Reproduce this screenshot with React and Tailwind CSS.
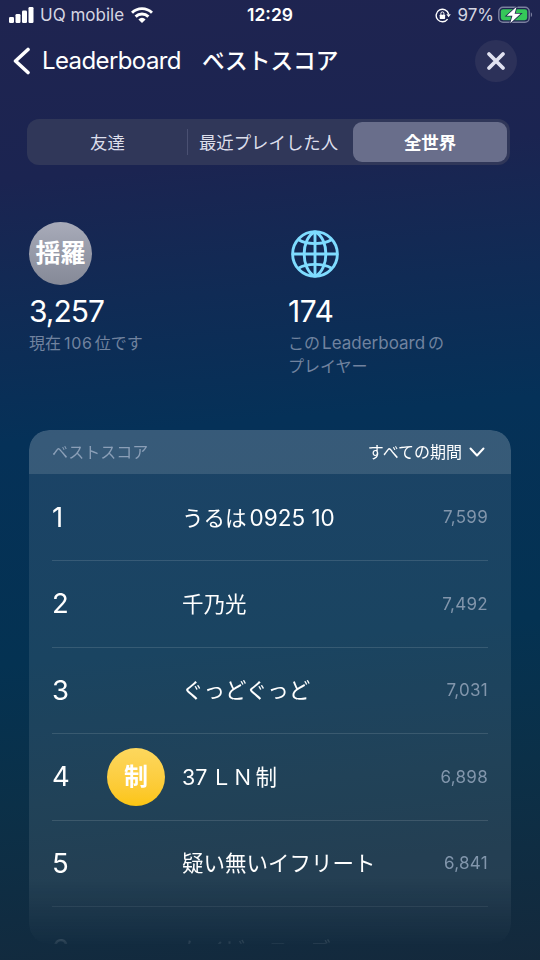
import React from 'react';

const fontStack = "font-['Inter','Noto_Sans_CJK_JP',sans-serif]";

const tabs = [
    { id: 'friends', label: '友達' },
    { id: 'recent', label: '最近プレイした人' },
    { id: 'global', label: '全世界' },
];

const scores = [
    { rank: 1, name: <>うるは<span className="ml-[3px] text-[22.5px]">0925 10</span></>, score: '7,599' },
    { rank: 2, name: '千乃光', score: '7,492' },
    { rank: 3, name: 'ぐっどぐっど', score: '7,031' },
    { rank: 4, name: <>37<span className="ml-[3px]">ＬＮ</span><span className="ml-[2px]">制</span></>, score: '6,898', avatar: '制' },
    { rank: 5, name: '疑い無いイフリート', score: '6,841' },
    { rank: 6, name: 'ケイビ・ユーズ', score: '' },
];

const SignalIcon = () => (
    <svg width="25" height="16" viewBox="0 0 25 16" fill="currentColor">
        <rect x="0" y="10" width="5" height="6" rx="1.2" />
        <rect x="6.5" y="7" width="5" height="9" rx="1.2" />
        <rect x="13" y="3.5" width="5" height="12.5" rx="1.2" />
        <rect x="19.5" y="0" width="5" height="16" rx="1.2" />
    </svg>
);

const WifiIcon = () => (
    <svg width="22" height="16" viewBox="0 0 22 16" fill="none" stroke="currentColor" strokeWidth="2.9">
        <path d="M1 5.7C6.5 .2 15.5 .2 21 5.7" />
        <path d="M4.6 9.6C8.2 6.1 13.8 6.1 17.4 9.6" />
        <path d="M7.4 12.4a5 5 0 0 1 7.2 0L11 16z" fill="currentColor" stroke="none" />
    </svg>
);

const LockIcon = () => (
    <svg width="16" height="15" viewBox="0 0 16 15" fill="none" stroke="currentColor" strokeWidth="1.4">
        <path d="M12.6 11.2A6.3 6.3 0 1 1 13.6 6" />
        <path d="M11.4 6.2h4.4l-2.2 3z" fill="currentColor" stroke="none" />
        <rect x="4.7" y="6.7" width="5.4" height="4.2" rx=".6" fill="currentColor" stroke="none" />
        <path d="M5.9 7V5.4a1.5 1.5 0 0 1 3 0V7" strokeWidth="1" />
    </svg>
);

const BatteryIcon = () => (
    <svg width="36" height="18" viewBox="0 0 36 18">
        <rect x=".8" y="1.2" width="30.4" height="15" rx="4.2" fill="none" stroke="#7b7f9e" strokeWidth="1.4" />
        <rect x="2.8" y="3.2" width="26.4" height="11" rx="2.4" fill="#35c759" />
        <path d="M32.8 6.3c1.7.7 1.7 4.1 0 4.8z" fill="#7b7f9e" />
        <path d="M18.6.8 8.7 9.8h5.7l-2.2 7.4 10.4-9.4h-6z" fill="#fff" stroke="#1f2450" strokeWidth="1.6" paintOrder="stroke" />
    </svg>
);

const GlobeIcon = () => (
    <svg width="48" height="48" viewBox="0 0 48 48" fill="none" stroke="#7fdcff" strokeWidth="2.9">
        <circle cx="24" cy="24" r="22.4" />
        <path d="M24 1.6C9.5 9 9.5 39 24 46.4M24 1.6C38.5 9 38.5 39 24 46.4" />
        <path d="M24 1.4v45.2M1.4 24h45.2" />
        <path d="M7.5 9.8C15.5 14.9 32.5 14.9 40.5 9.8" />
        <path d="M7.5 38.2C15.5 33.1 32.5 33.1 40.5 38.2" />
    </svg>
);

const StatusBar = () => (
    <div className="grid h-[30px] shrink-0 grid-cols-[1fr_auto_1fr] items-center pl-[9px] pr-[6px] text-[17px]">
        <div className="flex items-center">
            <SignalIcon />
            <span className="ml-[6px] mr-[7px] pt-px text-[#d5d6e2]">UQ mobile</span>
            <WifiIcon />
        </div>
        <span className="pr-[3px] pt-px text-[17.5px] font-semibold">12:29</span>
        <div className="flex items-center justify-end">
            <LockIcon />
            <span className="ml-[6px] mr-[4px] pt-px text-[#d5d6e2]">97%</span>
            <BatteryIcon />
        </div>
    </div>
);

const NavBar = () => (
    <div className="flex h-[61px] shrink-0 items-center pl-[13px] pr-[23px]">
        <svg width="18" height="28" viewBox="0 0 18 28" fill="none" stroke="currentColor" strokeWidth="3.6" strokeLinecap="round" strokeLinejoin="round">
            <path d="M15 2.5 2.5 14 15 25.5" />
        </svg>
        <span className="ml-[11px] text-[24px] tracking-[-0.6px]">Leaderboard</span>
        <h1 className="ml-[21px] pt-[2px] text-[22.7px] font-medium">ベストスコア</h1>
        <button className="ml-auto flex size-[42px] items-center justify-center rounded-full bg-[#2c3159]">
            <svg width="20" height="20" viewBox="0 0 20 20" stroke="#e0e1f0" strokeWidth="3.8" strokeLinecap="round">
                <path d="m3 3 14 14M17 3 3 17" />
            </svg>
        </button>
    </div>
);

const Tabs = ({ active }) => (
    <div className="mx-[27px] mt-[28px] flex h-[46px] w-[483px] shrink-0 items-center rounded-[12px] bg-[#303759] p-[3px] text-[17.4px] text-[#dcdeeb]">
        {tabs.map((tab, i) => (
            <button
                key={tab.id}
                className={
                    tab.id === active
                        ? 'ml-[2px] h-[40px] w-[154px] rounded-[9px] bg-[#696e8b] pt-[2px] font-bold text-white'
                        : i === 0
                            ? 'h-[26px] w-[158px] border-r border-[#4a5072] pr-[2px] pt-px'
                            : 'h-[26px] w-[163px] whitespace-nowrap pr-[2px] pt-px'
                }
            >
                {tab.label}
            </button>
        ))}
    </div>
);

const Stats = () => (
    <div className="flex h-[265px] shrink-0 pl-[29px] pt-[57px]">
        <div className="w-[259px]">
            <div className="flex size-[63px] items-center justify-center rounded-full bg-linear-to-b from-[#a8abb9] to-[#858997] pt-px text-[25px] font-bold">
                揺羅
            </div>
            <div className="mt-[7px] text-[30px] leading-[38px] tracking-[-1px]">3,257</div>
            <div className="mt-[2px] text-[16px] leading-[23px] text-[#71839f]">
                現在<span className="ml-[3px] mr-[2px] tracking-[0.7px]">106</span>位です
            </div>
        </div>
        <div>
            <div className="flex h-[63px] items-center pl-[3px]">
                <GlobeIcon />
            </div>
            <div className="mt-[7px] text-[30px] leading-[38px] tracking-[-0.5px]">174</div>
            <div className="mt-[2px] text-[16px] leading-[23px] text-[#71839f]">
                この<span className="ml-[2px] mr-[3px] text-[17px]">Leaderboard</span>の<br />プレイヤー
            </div>
        </div>
    </div>
);

const ScoreRow = ({ rank, name, score, avatar }) => (
    <div className="mx-[23px] flex h-[86.4px] items-center border-b border-white/12">
        <span className="w-[55px] text-[27.5px]">{rank}</span>
        <div className="w-[75px]">
            {avatar && (
                <div className="flex size-[58px] items-center justify-center rounded-full bg-linear-to-b from-[#fdd75d] to-[#fcc50f] pt-px text-[24px] font-bold">
                    {avatar}
                </div>
            )}
        </div>
        <span className="text-[21.5px]">{name}</span>
        <span className="ml-auto pt-px text-[17px] tracking-[0.3px] text-[#8296ac]">{score}</span>
    </div>
);

export default function App() {
    return (
        <div className={`flex h-[960px] w-[540px] flex-col overflow-hidden bg-linear-[175deg,#1f2450_0%,#1b2451_18%,#102b55_31%,#053158_44%,#043252_66%,#0b3048_80%,#14293c_100%] text-white ${fontStack}`}>
            <StatusBar />
            <NavBar />
            <Tabs active="global" />
            <Stats />
            <div className="mx-[29px] h-[514px] w-[482px] shrink-0 overflow-hidden rounded-[20px] bg-white/9 mask-[linear-gradient(to_bottom,black_87%,transparent_101%)]">
                <div className="mb-px flex h-[44px] items-center justify-between bg-white/12 pl-[23px] pr-[26px] text-[16px]">
                    <span className="text-[#8b9fb7]">ベストスコア</span>
                    <span className="flex items-center gap-[7px]">
                        すべての期間
                        <svg width="16" height="10" viewBox="0 0 16 10" fill="none" stroke="currentColor" strokeWidth="2" strokeLinecap="round" strokeLinejoin="round">
                            <path d="m1.5 1.5 6.5 7 6.5-7" />
                        </svg>
                    </span>
                </div>
                {scores.map((row) => (
                    <ScoreRow key={row.rank} {...row} />
                ))}
            </div>
        </div>
    );
}
